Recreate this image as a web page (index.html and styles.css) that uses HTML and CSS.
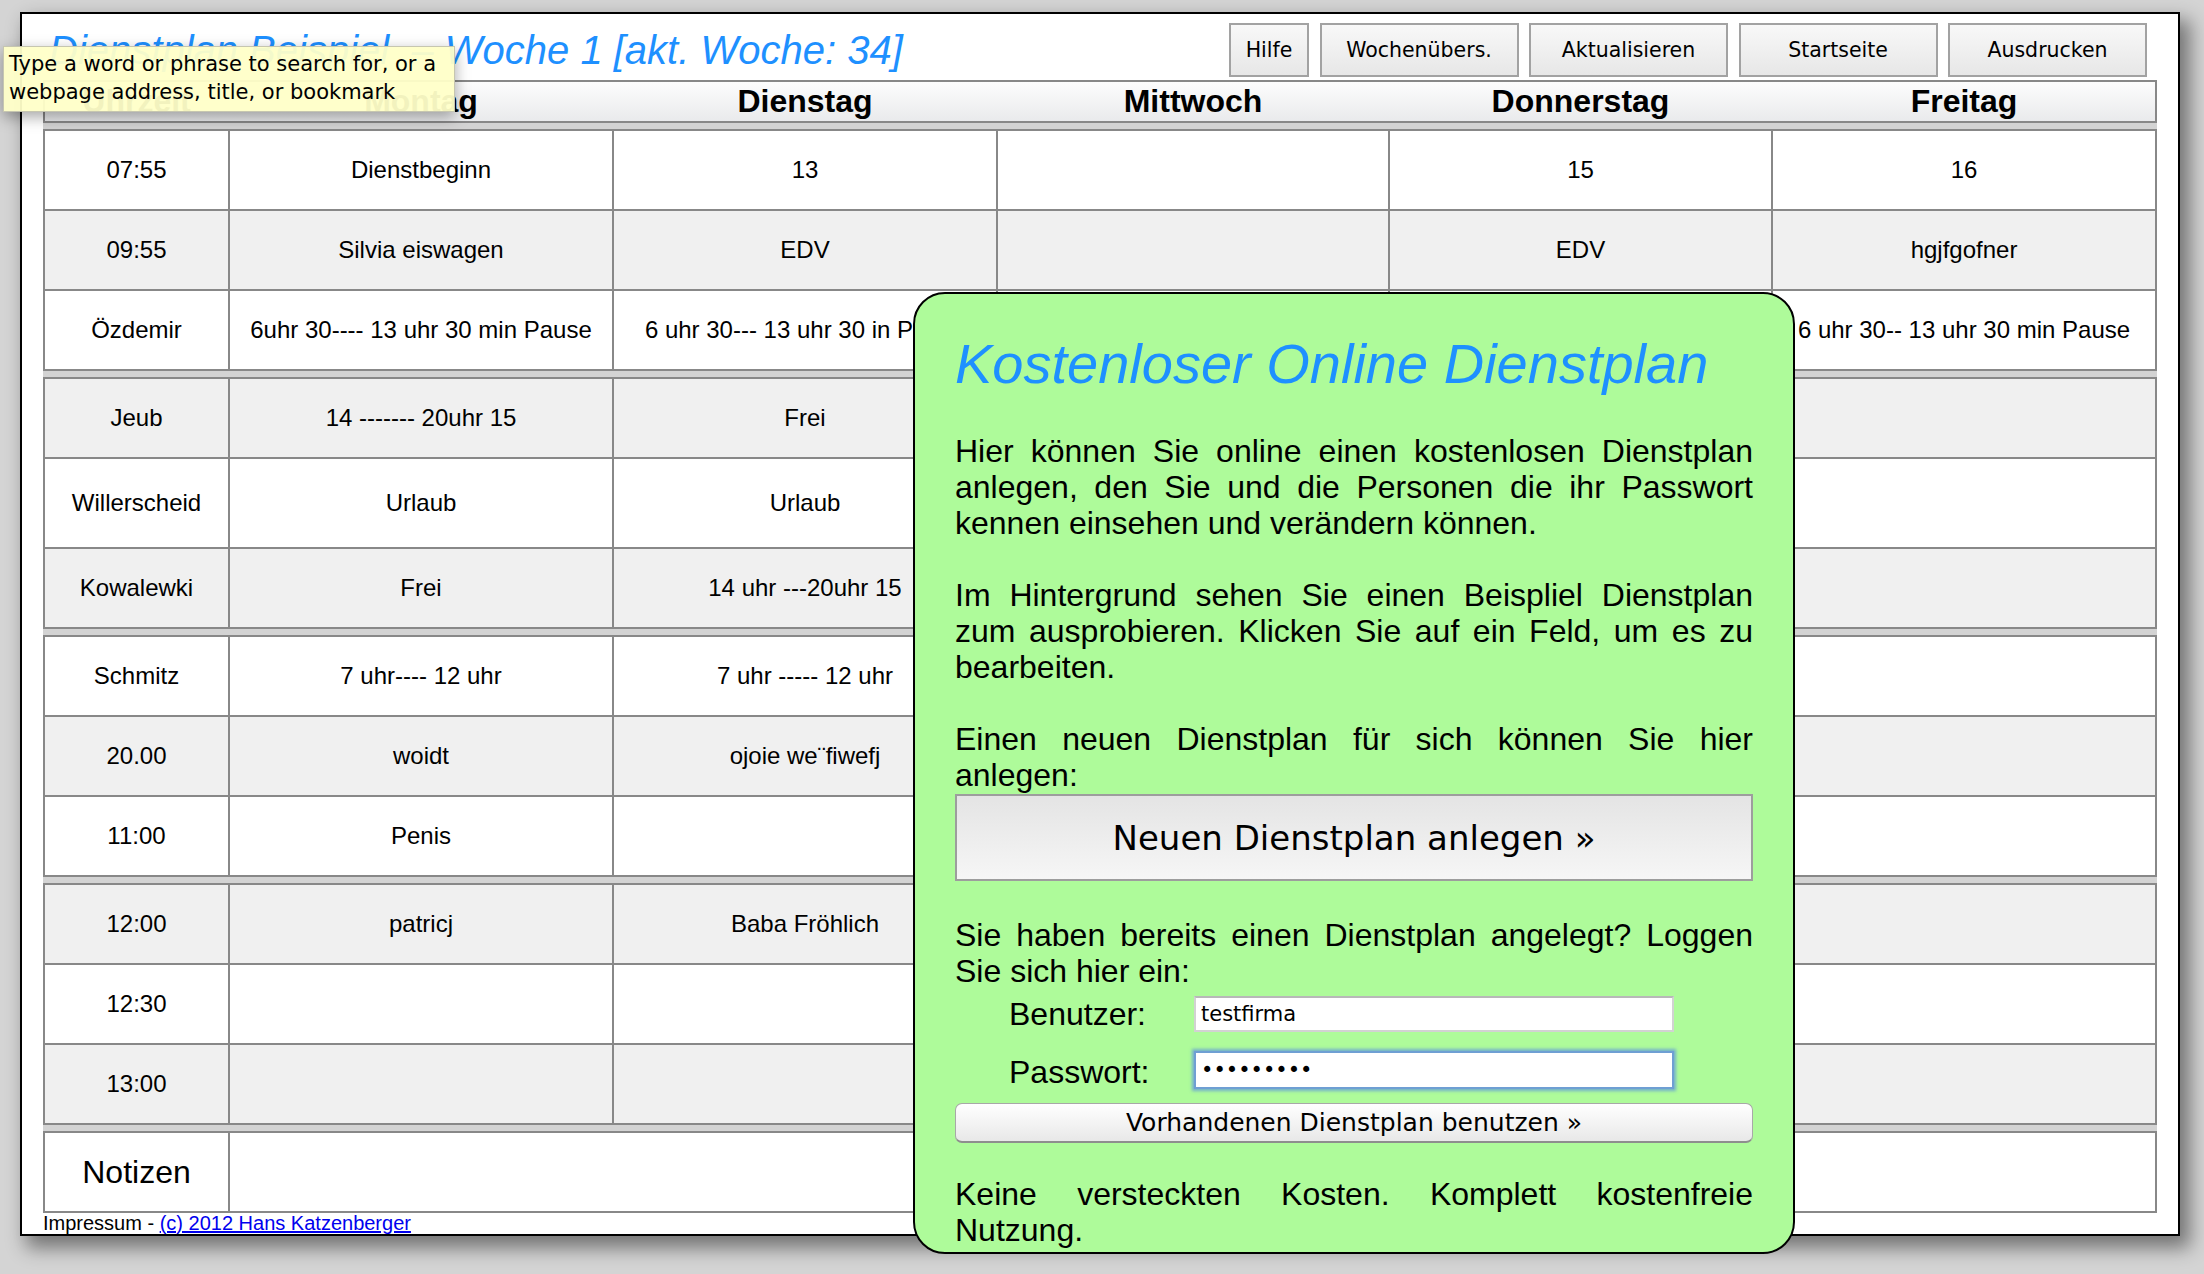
FILE: index.html
```html
<!DOCTYPE html>
<html lang="de">
<head>
<meta charset="utf-8">
<title>Dienstplan Beispiel</title>
<link rel="stylesheet" href="styles.css">
</head>
<body>
<div class="frame">
  <div class="topbar">
    <h1 class="page-title">Dienstplan Beispiel &nbsp;– Woche 1 [akt. Woche: 34]</h1>
    <div class="nav">
      <button class="nav-btn btn-small">Hilfe</button>
      <button class="nav-btn">Wochenübers.</button>
      <button class="nav-btn">Aktualisieren</button>
      <button class="nav-btn">Startseite</button>
      <button class="nav-btn">Ausdrucken</button>
    </div>
  </div>

  <div class="plan">
    <div class="plan-head">
      <div>Uhrzeit</div><div>Montag</div><div>Dienstag</div><div>Mittwoch</div><div>Donnerstag</div><div>Freitag</div>
    </div>

    <div class="group">
      <div class="row"><div class="cell">07:55</div><div class="cell">Dienstbeginn</div><div class="cell">13</div><div class="cell"></div><div class="cell">15</div><div class="cell">16</div></div>
      <div class="row alt"><div class="cell">09:55</div><div class="cell">Silvia eiswagen</div><div class="cell">EDV</div><div class="cell"></div><div class="cell">EDV</div><div class="cell">hgjfgofner</div></div>
      <div class="row"><div class="cell">Özdemir</div><div class="cell">6uhr 30---- 13 uhr 30 min Pause</div><div class="cell">6 uhr 30--- 13 uhr 30 in Pause</div><div class="cell"></div><div class="cell"></div><div class="cell">6 uhr 30-- 13 uhr 30 min Pause</div></div>
    </div>

    <div class="group">
      <div class="row alt"><div class="cell">Jeub</div><div class="cell">14 ------- 20uhr 15</div><div class="cell">Frei</div><div class="cell"></div><div class="cell"></div><div class="cell"></div></div>
      <div class="row tall"><div class="cell">Willerscheid</div><div class="cell">Urlaub</div><div class="cell">Urlaub</div><div class="cell"></div><div class="cell"></div><div class="cell"></div></div>
      <div class="row alt"><div class="cell">Kowalewki</div><div class="cell">Frei</div><div class="cell">14 uhr ---20uhr 15</div><div class="cell"></div><div class="cell"></div><div class="cell"></div></div>
    </div>

    <div class="group">
      <div class="row"><div class="cell">Schmitz</div><div class="cell">7 uhr---- 12 uhr</div><div class="cell">7 uhr ----- 12 uhr</div><div class="cell"></div><div class="cell"></div><div class="cell"></div></div>
      <div class="row alt"><div class="cell">20.00</div><div class="cell">woidt</div><div class="cell">ojoie we¨fiwefj</div><div class="cell"></div><div class="cell"></div><div class="cell"></div></div>
      <div class="row"><div class="cell">11:00</div><div class="cell">Penis</div><div class="cell"></div><div class="cell"></div><div class="cell"></div><div class="cell"></div></div>
    </div>

    <div class="group">
      <div class="row alt"><div class="cell">12:00</div><div class="cell">patricj</div><div class="cell">Baba Fröhlich</div><div class="cell"></div><div class="cell"></div><div class="cell"></div></div>
      <div class="row"><div class="cell">12:30</div><div class="cell"></div><div class="cell"></div><div class="cell"></div><div class="cell"></div><div class="cell"></div></div>
      <div class="row alt"><div class="cell">13:00</div><div class="cell"></div><div class="cell"></div><div class="cell"></div><div class="cell"></div><div class="cell"></div></div>
    </div>

    <div class="group">
      <div class="row"><div class="cell cell-notes">Notizen</div><div class="cell cell-wide"></div></div>
    </div>
  </div>

  <div class="footer">Impressum - <a href="#">(c) 2012 Hans Katzenberger</a></div>
</div>

<div class="tooltip">Type a word or phrase to search for, or a<br>webpage address, title, or bookmark</div>

<div class="promo">
  <h2 class="promo-title">Kostenloser Online Dienstplan</h2>
  <p>Hier können Sie online einen kostenlosen Dienstplan anlegen, den Sie und die Personen die ihr Passwort kennen einsehen und verändern können.</p>
  <p>Im Hintergrund sehen Sie einen Beispliel Dienstplan zum ausprobieren. Klicken Sie auf ein Feld, um es zu bearbeiten.</p>
  <p class="p-tight">Einen neuen Dienstplan für sich können Sie hier anlegen:</p>
  <button class="btn-create">Neuen Dienstplan anlegen »</button>
  <form class="login">
    <p class="p-tight">Sie haben bereits einen Dienstplan angelegt? Loggen Sie sich hier ein:</p>
    <div class="field"><label class="field-label">Benutzer:</label><input class="field-input" type="text" value="testfirma"></div>
    <div class="field"><label class="field-label">Passwort:</label><input class="field-input is-focused" type="password" value="geheim123"></div>
    <button class="btn-login" type="button">Vorhandenen Dienstplan benutzen »</button>
  </form>
  <p class="p-last">Keine versteckten Kosten. Komplett kostenfreie Nutzung.</p>
</div>
</body>
</html>
```

FILE: styles.css
```css
* { box-sizing: border-box; }

html, body {
  margin: 0;
}

body {
  position: relative;
  width: 2204px;
  height: 1274px;
  overflow: hidden;
  padding: 12px 0 0 20px;
  background: #d4d4d4;
  font-family: "Liberation Sans", Arial, sans-serif;
  color: #000;
}

.frame {
  width: 2160px;
  background: #fff;
  border: 2px solid #000;
  box-shadow: 8px 10px 18px 2px rgba(0, 0, 0, 0.45);
  padding: 0 21px;
}

.topbar {
  display: flex;
  justify-content: space-between;
  align-items: flex-start;
  height: 66px;
}

.page-title {
  margin: 13px 0 0 6px;
  font-size: 40px;
  line-height: 46px;
  font-style: italic;
  font-weight: normal;
  color: #1e90ff;
  white-space: nowrap;
}

.nav {
  display: flex;
  gap: 10.5px;
  margin: 9px 10px 0 0;
}

.nav-btn {
  width: 199px;
  height: 54px;
  padding: 0;
  border: 2px solid #a2a2a2;
  background: linear-gradient(#f8f8f8, #e7e7e7);
  font-family: "DejaVu Sans", sans-serif;
  font-size: 20.5px;
  color: #000;
}

.btn-small { width: 80px; }

.plan {
  display: flex;
  flex-direction: column;
  gap: 6px;
  background: #d3d3d3;
}

.plan-head {
  display: grid;
  grid-template-columns: 183px 382px 382px 390px 381px 382px;
  column-gap: 2px;
  height: 43px;
  border: 2px solid #888;
  background: linear-gradient(#fdfdfd, #e9eaec);
  align-items: center;
  text-align: center;
  font-size: 32px;
  font-weight: bold;
}

.group {
  display: flex;
  flex-direction: column;
  gap: 2px;
  padding: 2px;
  background: #888;
}

.row {
  display: grid;
  grid-template-columns: 183px 382px 382px 390px 381px 382px;
  column-gap: 2px;
}

.cell {
  height: 78px;
  display: flex;
  align-items: center;
  justify-content: center;
  text-align: center;
  white-space: nowrap;
  font-size: 24px;
  background: #fff;
}

.row.alt .cell { background: #f0f0f0; }
.row.tall .cell { height: 88px; }

.cell-notes { font-size: 32px; }
.cell-wide { grid-column: 2 / -1; }

.footer {
  height: 21px;
  font-size: 20px;
  line-height: 21px;
  white-space: nowrap;
}

.footer a {
  color: #0000ee;
  text-decoration: underline;
}

.tooltip {
  position: absolute;
  left: 3px;
  top: 46px;
  width: 452px;
  height: 66px;
  padding: 3px 5px;
  background: rgba(255, 255, 200, 0.95);
  border: 1px solid #c6c6b0;
  box-shadow: 0 5px 14px rgba(0, 0, 0, 0.35);
  font-family: "DejaVu Sans", sans-serif;
  font-size: 21px;
  line-height: 28px;
  white-space: nowrap;
}

.promo {
  position: absolute;
  left: 913px;
  top: 292px;
  width: 882px;
  padding: 0 40px 4px;
  background: #aefb9a;
  border: 2px solid #000;
  border-radius: 32px;
}

.promo-title {
  margin: 38px 0 37px;
  font-size: 56px;
  line-height: 64px;
  font-style: italic;
  font-weight: normal;
  color: #1e90ff;
  white-space: nowrap;
}

.promo p {
  margin: 0 0 36px;
  font-size: 32px;
  line-height: 36px;
  text-align: justify;
}

.promo p.p-tight { margin-bottom: 0; }
.promo p.p-last { margin: 33px 0 0; }

.btn-create {
  display: block;
  width: 100%;
  height: 87px;
  margin: 1px 0 36px;
  padding: 0;
  border: 2px solid #9d9d9d;
  background: linear-gradient(#e4e4e4, #f6f6f6);
  font-family: "DejaVu Sans", sans-serif;
  font-size: 34px;
  color: #000;
}

.login { margin: 0; }

.field {
  display: flex;
  align-items: center;
  height: 50px;
  margin: 0 0 8px 54px;
}

.field-label {
  width: 185px;
  font-size: 32px;
}

.field-input {
  width: 480px;
  height: 36px;
  padding: 0 5px;
  border: 2px solid #d2d2d2;
  border-top-color: #b8b8b8;
  background: #fff;
  font-family: "DejaVu Sans", sans-serif;
  font-size: 21px;
  color: #000;
  outline: none;
}

.field-input.is-focused {
  height: 38px;
  margin-top: -5px;
  border-color: #6f9fd3;
  box-shadow: 0 0 3px 2px rgba(95, 150, 220, 0.75);
}

.btn-login {
  display: block;
  width: 100%;
  height: 40px;
  margin-top: -2px;
  padding: 0;
  border: 1px solid #a8a8a8;
  border-bottom: 2px solid #8e8e8e;
  border-radius: 7px;
  background: linear-gradient(#ffffff, #e8e8e8);
  font-family: "DejaVu Sans", sans-serif;
  font-size: 25px;
  line-height: 1;
  color: #000;
}
```
